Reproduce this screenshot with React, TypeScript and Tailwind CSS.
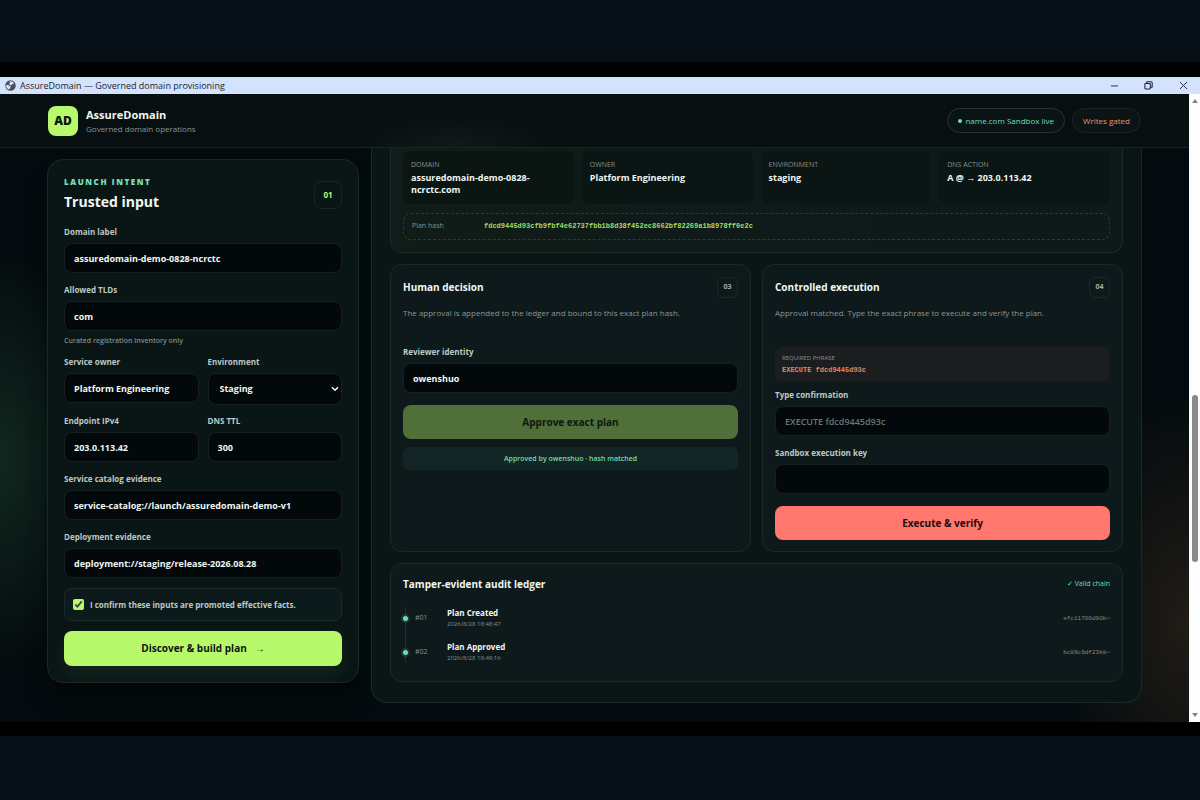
import { useState } from 'react';
import type { InputHTMLAttributes, ReactNode } from 'react';

interface FieldProps extends InputHTMLAttributes<HTMLInputElement> {
  id: string;
  label: string;
  hint?: string;
}

const controlClass =
  'h-[30px] w-full min-w-0 rounded-lg border border-[#162021] bg-[#03090b] px-[9px] text-[9px] font-bold text-[#f1f7f3] outline-none placeholder:font-semibold placeholder:text-[#6c7575] focus:border-[#b8f86b]';

const summary = [
  { term: 'Domain', value: 'assuredomain-demo-0828-ncrctc.com', tint: 'bg-[#0b1613]' },
  { term: 'Owner', value: 'Platform Engineering', tint: 'bg-[#0a1514]' },
  { term: 'Environment', value: 'staging', tint: 'bg-[#0a1514]' },
  { term: 'DNS action', value: 'A @ → 203.0.113.42', tint: 'bg-[#0a1515]' },
];

const ledger = [
  { id: '#01', title: 'Plan Created', time: '2026/8/28 18:48:47', hash: 'efc11700d90b' },
  { id: '#02', title: 'Plan Approved', time: '2026/8/28 18:49:16', hash: 'bc89c9df23b8' },
];

function Label({ htmlFor, children }: { htmlFor: string; children: ReactNode }) {
  return (
    <label htmlFor={htmlFor} className="mb-[3px] block text-[8px] leading-4 font-bold text-[#bdc9c5]">
      {children}
    </label>
  );
}

function Field({ id, label, hint, ...props }: FieldProps) {
  return (
    <div className="min-w-0">
      <Label htmlFor={id}>{label}</Label>
      <input id={id} className={controlClass} {...props} />
      {hint && <p className="mt-1 text-[7px] leading-3 font-semibold text-[#7f8b89]">{hint}</p>}
    </div>
  );
}

function StepBadge({ children }: { children: ReactNode }) {
  return (
    <span className="flex size-[21px] items-center justify-center rounded-md border border-[#1d2829] text-[7px] font-bold text-[#a4afac]">
      {children}
    </span>
  );
}

function TitleBar() {
  return (
    <div className="flex h-[17px] items-center bg-[#d3e3fd] pl-[5px] text-[#1c2330]">
      <svg viewBox="0 0 16 16" className="size-[11px]" aria-hidden="true">
        <circle cx="8" cy="8" r="7.6" fill="#4b5058" />
        <path
          d="M1.800 7.200h2.800c1 0 1.300 1.600 2.400 1.700 1 .1 1.500.5 1.500 1.300s-1.500.8-1.500 1.800v1.900A6 6 0 0 1 1.800 7.200ZM6.500 2.200C9 1.500 11.700 2.600 13 4.800c-.6 1-1.400 1.400-2.600 1.400-1.200 0-.5 1.400-1.700 1.600-1.400.2-2.500-.8-2.500-1.900 0-1.300 1.200-1 1.200-2.100 0-.7-.9-.7-.9-1.600Z"
          fill="#d3e3fd"
        />
      </svg>
      <span className="ml-1 text-[9px] leading-4">AssureDomain — Governed domain provisioning</span>
      <div className="ml-auto flex">
        <button type="button" aria-label="Minimize" className="flex h-[17px] w-[34px] items-center justify-center">
          <svg viewBox="0 0 10 10" className="size-[9px]" fill="none" stroke="currentColor">
            <path d="M1 5.500h8" />
          </svg>
        </button>
        <button type="button" aria-label="Restore" className="flex h-[17px] w-[35px] items-center justify-center">
          <svg viewBox="0 0 10 10" className="size-[9px]" fill="none" stroke="currentColor" strokeWidth="1.200">
            <rect x="1" y="2.800" width="6" height="6" rx="0.800" />
            <path d="M3 2.600V1.600c0-.4.300-.7.700-.7h4c.8 0 1.400.6 1.400 1.400v4c0 .4-.3.700-.7.700h-1" />
          </svg>
        </button>
        <button type="button" aria-label="Close" className="flex h-[17px] w-[34px] items-center justify-center">
          <svg viewBox="0 0 10 10" className="size-[9px]" fill="none" stroke="currentColor" strokeWidth="1">
            <path d="M1 1l8 8M9 1L1 9" />
          </svg>
        </button>
      </div>
    </div>
  );
}

function Scrollbar() {
  return (
    <div className="flex w-[11px] shrink-0 flex-col items-center bg-[#fcfdfc] py-[5px]" aria-hidden="true">
      <svg viewBox="0 0 6 4" className="h-1 w-1.5">
        <path d="M3 0l3 4H0z" fill="#858585" />
      </svg>
      <div className="grow-[293]" />
      <div className="w-[6px] grow-[167] rounded-full bg-[#8b8b8b]" />
      <div className="grow-[152]" />
      <svg viewBox="0 0 6 4" className="h-1 w-1.5">
        <path d="M3 4l3-4H0z" fill="#858585" />
      </svg>
    </div>
  );
}

function SiteHeader() {
  return (
    <header className="flex h-[54px] items-center border-b border-[#182221] bg-[#070f11] bg-[radial-gradient(ellipse_100px_34px_at_455px_100%,#10191b,transparent)] px-12">
      <div className="flex size-[30px] items-center justify-center rounded-lg bg-[#b8f86b] text-xs font-extrabold text-[#0a1510]">
        AD
      </div>
      <div className="ml-2">
        <p className="text-[11px] leading-4 font-bold text-[#f1f7f3]">AssureDomain</p>
        <p className="text-[8px] leading-3 text-[#8b9795]">Governed domain operations</p>
      </div>
      <div className="ml-auto flex gap-[7px] text-[8px] font-medium">
        <span className="flex h-[25px] items-center gap-[3px] rounded-full border border-[#223532] bg-[#0a1416] px-[10px] text-[#70dfb0]">
          <span className="size-1 rounded-full bg-[#70dfb0]" />
          name.com Sandbox live
        </span>
        <span className="flex h-[25px] items-center rounded-full border border-[#1c2526] bg-[#0c1415] px-[10px] text-[#f09468]">
          Writes gated
        </span>
      </div>
    </header>
  );
}

function IntentForm() {
  const [confirmed, setConfirmed] = useState(true);

  return (
    <form
      onSubmit={(e) => e.preventDefault()}
      className="mt-[11px] flex flex-col gap-[9px] rounded-2xl border border-[#1b2828] bg-[#0a1516] p-4 shadow-xl shadow-black/30"
    >
      <div className="flex items-center justify-between pb-px">
        <div>
          <p className="text-[8px] leading-3 font-extrabold tracking-[0.2em] text-[#79e2b8] uppercase">
            Launch intent
          </p>
          <h2 className="mt-[2px] text-sm leading-6 font-bold text-[#f1f7f3]">Trusted input</h2>
        </div>
        <span className="flex size-7 items-center justify-center rounded-lg border border-[#1a2626] text-[8px] font-bold text-[#b8f86b]">
          01
        </span>
      </div>

      <Field id="domain-label" label="Domain label" defaultValue="assuredomain-demo-0828-ncrctc" />
      <Field id="tlds" label="Allowed TLDs" defaultValue="com" hint="Curated registration inventory only" />

      <div className="-mt-[2px] grid grid-cols-2 gap-x-[9px] gap-y-2">
        <Field id="owner" label="Service owner" defaultValue="Platform Engineering" />
        <div className="min-w-0">
          <Label htmlFor="environment">Environment</Label>
          <div className="relative">
            <select
              id="environment"
              defaultValue="staging"
              className="block h-8 w-full appearance-none rounded-lg border border-[#162021] bg-[#03090b] pl-[11px] text-[9px] font-bold text-[#f1f7f3]"
            >
              <option value="staging">Staging</option>
              <option value="production">Production</option>
            </select>
            <svg
              viewBox="0 0 8 6"
              className="pointer-events-none absolute top-[13px] right-[3px] h-[6px] w-2"
              fill="none"
              stroke="#f1f7f3"
              strokeWidth="1.600"
              aria-hidden="true"
            >
              <path d="M1 1.200l3 3 3-3" />
            </svg>
          </div>
        </div>
        <Field id="endpoint" label="Endpoint IPv4" defaultValue="203.0.113.42" />
        <Field id="ttl" label="DNS TTL" defaultValue="300" />
      </div>

      <Field
        id="catalog"
        label="Service catalog evidence"
        defaultValue="service-catalog://launch/assuredomain-demo-v1"
      />
      <Field id="deployment" label="Deployment evidence" defaultValue="deployment://staging/release-2026.08.28" />

      <label className="mt-px flex h-[33px] items-center gap-[6px] rounded-lg border border-[#1b2a2a] bg-[#0d1a1b] px-2 text-[8px] font-bold text-[#bdc9c5]">
        <input
          type="checkbox"
          checked={confirmed}
          onChange={(e) => setConfirmed(e.target.checked)}
          className="size-[11px] accent-[#b8f86b]"
        />
        I confirm these inputs are promoted effective facts.
      </label>

      <button
        type="submit"
        className="mt-px flex h-[35px] items-center justify-center gap-2 rounded-lg bg-[#b8f86b] text-[10px] font-bold text-[#0a1510] shadow-[0_8px_20px_rgba(184,248,107,0.08)]"
      >
        Discover &amp; build plan <span>→</span>
      </button>
    </form>
  );
}

function PlanSummary() {
  return (
    <section className="rounded-b-xl border border-t-0 border-[#1d2a2a] bg-gradient-to-r from-[#0f1c17] to-[#0d191a] px-3 pt-[3px] pb-3">
      <dl className="grid grid-cols-4 gap-2">
        {summary.map((item) => (
          <div key={item.term} className={`h-[53px] rounded-lg px-2 pt-2 ${item.tint}`}>
            <dt className="text-[7px] leading-3 text-[#87938f] uppercase">{item.term}</dt>
            <dd className="mt-px text-[9px] leading-3 font-bold break-words text-[#f1f7f3]">{item.value}</dd>
          </div>
        ))}
      </dl>
      <div className="mt-[9px] flex h-[27px] items-center rounded-lg border border-dashed border-[#2c3d26] px-2">
        <span className="w-[72px] shrink-0 text-[7px] text-[#87938f]">Plan hash</span>
        <code className="font-['Liberation_Mono',monospace] text-[7px] font-bold text-[#a5dc68]">
          fdcd9445d93cfb9fbf4e62737fbb1b8d38f452ec8662bf82269a1b8978ff0e2c
        </code>
      </div>
    </section>
  );
}

function StepCard({ title, step, text, children }: { title: string; step: string; text: string; children: ReactNode }) {
  return (
    <section className="flex flex-col rounded-xl border border-[#1c2929] bg-[#0e191b] px-3 pt-3 pb-[11px]">
      <div className="flex h-5 items-center justify-between">
        <h3 className="text-[10px] font-bold text-[#f1f7f3]">{title}</h3>
        <StepBadge>{step}</StepBadge>
      </div>
      <p className="mt-2 mb-[23px] text-[8px] leading-4 text-[#8b9795]">{text}</p>
      {children}
    </section>
  );
}

function AuditLedger() {
  return (
    <section className="rounded-xl border border-[#1c2929] bg-[#0e191b] p-3">
      <div className="flex h-4 items-center justify-between">
        <h3 className="text-[10px] font-bold text-[#f1f7f3]">Tamper-evident audit ledger</h3>
        <span className="text-[7px] font-medium text-[#70dfb0]">✓ Valid chain</span>
      </div>
      <ol className="relative mt-[9px]">
        <li className="absolute top-1.5 bottom-1.5 left-[2px] w-px bg-[#23302f]" aria-hidden="true" />
        {ledger.map((entry) => (
          <li key={entry.id} className="relative flex h-[34px] items-center">
            <span className="size-[5px] rounded-full bg-[#70dfb0] ring-2 ring-[#70dfb0]/15" />
            <span className="ml-[7px] w-8 text-[7px] text-[#87938f]">{entry.id}</span>
            <div>
              <p className="text-[8px] leading-3 font-bold text-[#f1f7f3]">{entry.title}</p>
              <p className="text-[6px] leading-[10px] text-[#87938f]">{entry.time}</p>
            </div>
            <code className="ml-auto font-['Liberation_Mono',monospace] text-[6px] text-[#7f8b89]">{entry.hash}⋯</code>
          </li>
        ))}
      </ol>
    </section>
  );
}

export default function App() {
  return (
    <div className="flex min-h-screen flex-col bg-[#070f17] pt-[62px] font-['Open_Sans','Noto_Sans',sans-serif]">
      <div className="bg-black pt-[15px] pb-[14px]">
        <TitleBar />
        <div className="flex">
          <div className="min-w-0 grow bg-[#040b0e] bg-[radial-gradient(ellipse_100px_210px_at_0%_58%,#11271f,transparent),radial-gradient(ellipse_130px_230px_at_100%_84%,#211c17,transparent)]">
            <SiteHeader />
            <main className="grid grid-cols-[312fr_771fr] items-start gap-3 px-[47px] pb-[19px]">
              <IntentForm />

              <div className="flex flex-col gap-[11px] rounded-b-2xl border border-t-0 border-[#1b2828] bg-[#0a1516] px-[18px] pb-5">
                <PlanSummary />

                <div className="grid grid-cols-2 gap-[11px]">
                  <StepCard
                    title="Human decision"
                    step="03"
                    text="The approval is appended to the ledger and bound to this exact plan hash."
                  >
                    <Field id="reviewer" label="Reviewer identity" defaultValue="owenshuo" />
                    <button
                      type="button"
                      disabled
                      className="mt-3 h-[34px] rounded-lg bg-[#506f39] text-[10px] font-bold text-[#0b1812]"
                    >
                      Approve exact plan
                    </button>
                    <p className="mt-2 rounded-md bg-[#132625] pt-px text-center text-[7px] leading-[22px] font-semibold text-[#70dfb0]">
                      Approved by owenshuo · hash matched
                    </p>
                  </StepCard>

                  <StepCard
                    title="Controlled execution"
                    step="04"
                    text="Approval matched. Type the exact phrase to execute and verify the plan."
                  >
                    <div className="mt-[3px] mb-1.5 flex h-[34px] flex-col justify-center rounded-md bg-[#1c1d1e] px-[7px]">
                      <span className="text-[6px] leading-3 text-[#87938f] uppercase">Required phrase</span>
                      <code className="font-['Liberation_Mono',monospace] text-[7px] leading-3 font-bold text-[#e08a62]">
                        EXECUTE fdcd9445d93c
                      </code>
                    </div>
                    <div className="flex flex-col gap-[9px]">
                      <Field id="confirmation" label="Type confirmation" placeholder="EXECUTE fdcd9445d93c" />
                      <Field id="execution-key" label="Sandbox execution key" type="password" />
                    </div>
                    <button
                      type="button"
                      className="mt-3 h-[34px] rounded-lg bg-[#ff776e] text-[10px] font-bold text-[#240c0b]"
                    >
                      Execute &amp; verify
                    </button>
                  </StepCard>
                </div>

                <AuditLedger />
              </div>
            </main>
          </div>
          <Scrollbar />
        </div>
      </div>
    </div>
  );
}
